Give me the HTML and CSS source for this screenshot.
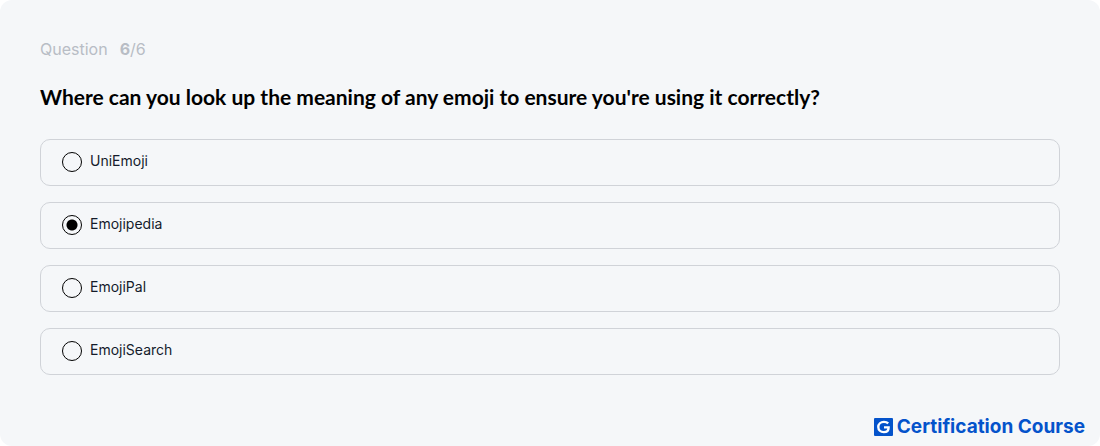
FILE: index.html
```html
<!DOCTYPE html>
<html lang="en">
<head>
    <meta charset="UTF-8">
    <meta name="viewport" content="width=device-width, initial-scale=1.0">
    <title>Certification Course</title>
    <link rel="stylesheet" href="styles.css">
</head>
<body>
    <main class="quiz">
        <p class="progress"><span>Question</span> <span><b>6</b>/6</span></p>

        <form>
            <fieldset class="options">
                <legend class="question">Where can you look up the meaning of any emoji to ensure you're using it correctly?</legend>

                <label class="option">
                    <input type="radio" name="answer" value="uniemoji">
                    <span>UniEmoji</span>
                </label>
                <label class="option">
                    <input type="radio" name="answer" value="emojipedia" checked>
                    <span>Emojipedia</span>
                </label>
                <label class="option">
                    <input type="radio" name="answer" value="emojipal">
                    <span>EmojiPal</span>
                </label>
                <label class="option">
                    <input type="radio" name="answer" value="emojisearch">
                    <span>EmojiSearch</span>
                </label>
            </fieldset>
        </form>

        <footer class="brand">
            <svg class="logo" viewBox="0 0 19 18" aria-hidden="true">
                <rect width="19" height="18" rx="1" fill="#0453cb"/>
                <path d="M14.200 5.400C13.100 4.300 11.600 3.900 9.900 3.900C6.700 3.900 4.300 6 4.300 9s2.300 5.100 5.500 5.100c3 0 4.800-1.800 4.800-4.700H10" fill="none" stroke="#fff" stroke-width="2.400"/>
            </svg>
            <span>Certification Course</span>
        </footer>
    </main>
</body>
</html>
```

FILE: styles.css
```css
* {
    box-sizing: border-box;
}
body {
    margin: 0;
    background: #fff;
    color: #141b2b;
    font-family: Inter, sans-serif;
}
.quiz {
    min-height: 100vh;
    display: flex;
    flex-direction: column;
    padding: 39px 40px 8px;
    background: #f5f7f9;
    border-radius: 12px;
}
.progress {
    display: flex;
    gap: 12px;
    margin: 0 0 24px;
    color: #b8bdc5;
    font-size: 16px;
    line-height: 20px;
}
.options {
    display: grid;
    gap: 16px;
    margin: 0;
    padding: 0;
    border: none;
}
.question {
    margin-bottom: 28px;
    padding: 0;
    color: #000;
    font-family: Lato, sans-serif;
    font-size: 21px;
    font-weight: 700;
    line-height: 28px;
}
.option {
    display: flex;
    align-items: center;
    gap: 8px;
    padding: 11px 21px 12px;
    border: 1px solid #d0d3d8;
    border-radius: 10px;
    font-size: 14px;
    line-height: 20px;
    cursor: pointer;
}
.option span {
    padding-bottom: 2px;
}
.option input {
    appearance: none;
    width: 20px;
    height: 20px;
    margin: 0;
    border: 1px solid #000;
    border-radius: 50%;
}
.option input:checked {
    background: radial-gradient(circle, #000 5px, transparent 6px);
}
.brand {
    display: flex;
    align-items: center;
    align-self: flex-end;
    gap: 4px;
    margin-top: auto;
    margin-right: -25px;
    color: #0453cb;
    font-size: 19px;
    font-weight: 700;
    line-height: 22px;
}
.logo {
    width: 19px;
    height: 18px;
}
```
